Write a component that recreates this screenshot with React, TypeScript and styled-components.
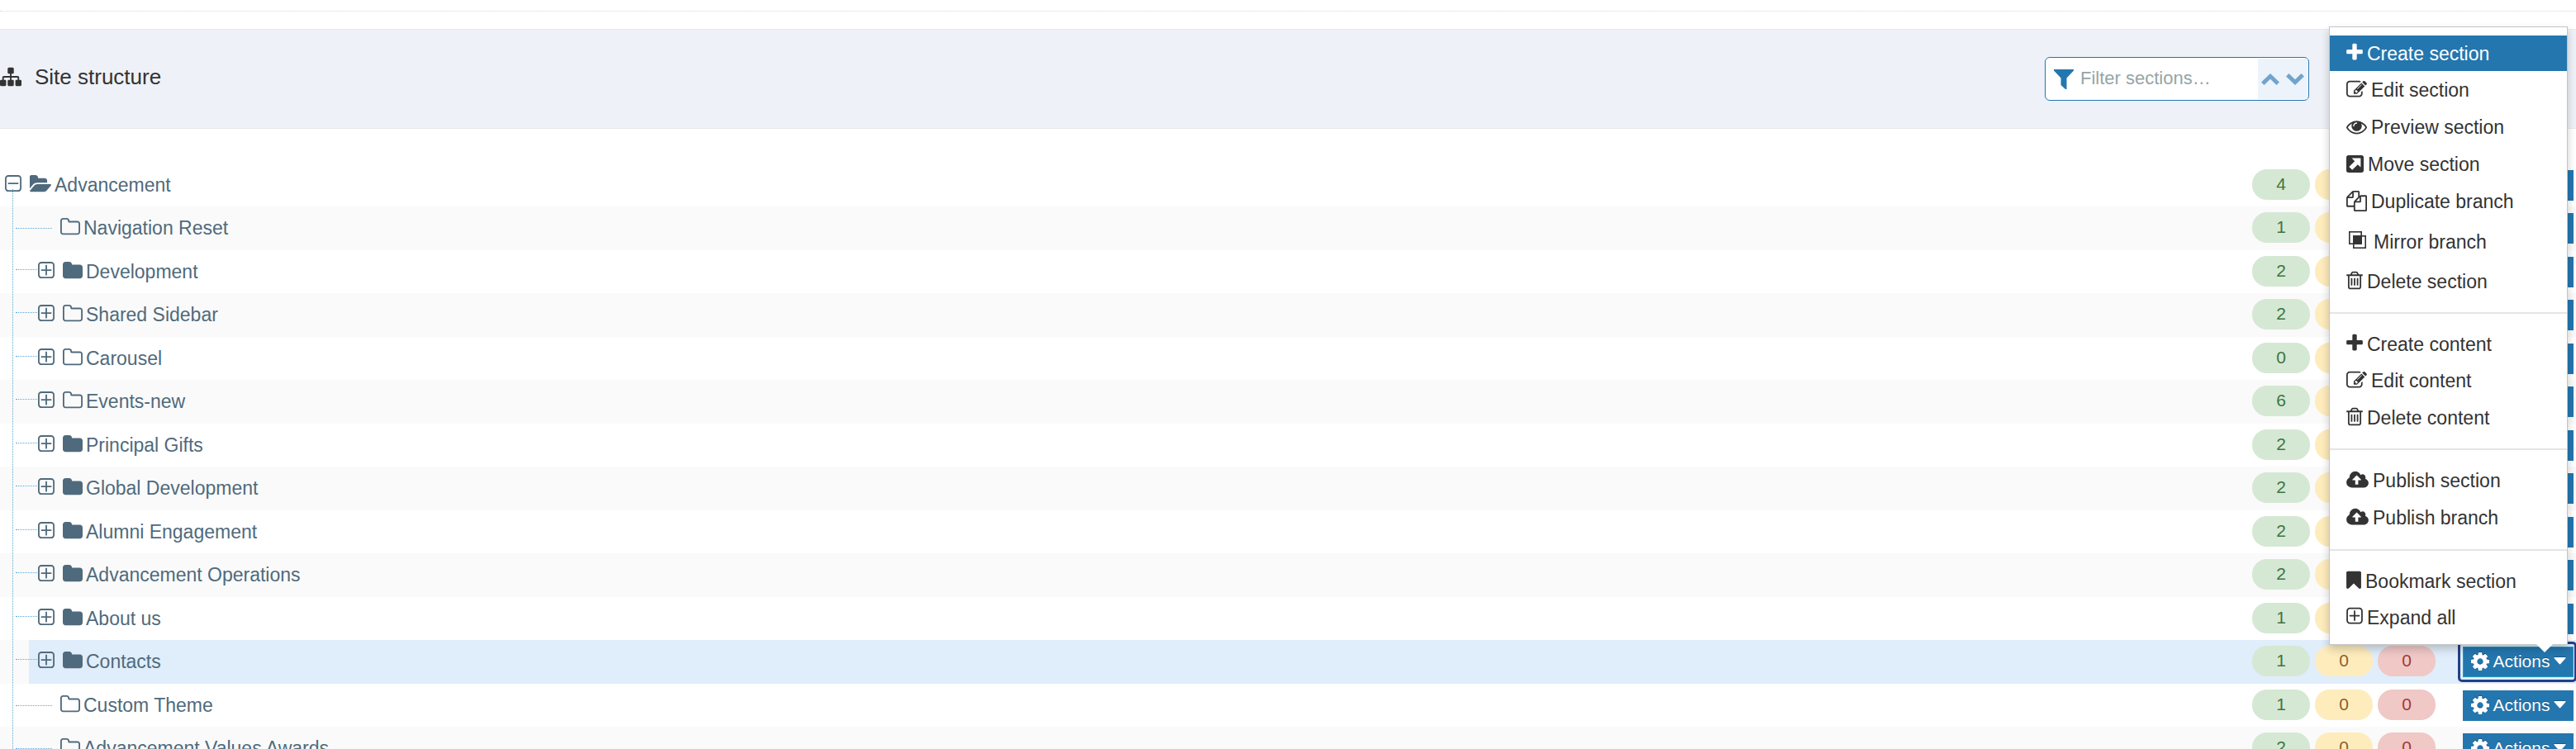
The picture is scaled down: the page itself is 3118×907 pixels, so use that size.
import React from "react";
import styled, { createGlobalStyle, css } from "styled-components";

const GlobalStyle = createGlobalStyle`
  *, *::before, *::after { box-sizing: border-box; }
  body {
    margin: 0;
    background: #fff;
    color: #333;
    font-family: "Liberation Sans", Arial, sans-serif;
    font-size: 23px;
  }
  ul { margin: 0; padding: 0; list-style: none; }
  button, input { font-family: inherit; }
`;

/* ---------- icons ---------- */

type Glyph = { x: number; w: number; d: string };

const glyphs: Record<string, Glyph> = {
  sitemap: { x: 0, w: 1792, d: "M1792 1248v320q0 40-28 68t-68 28h-320q-40 0-68-28t-28-68v-320q0-40 28-68t68-28h96v-192h-512v192h96q40 0 68 28t28 68v320q0 40-28 68t-68 28h-320q-40 0-68-28t-28-68v-320q0-40 28-68t68-28h96v-192h-512v192h96q40 0 68 28t28 68v320q0 40-28 68t-68 28h-320q-40 0-68-28t-28-68v-320q0-40 28-68t68-28h96v-192q0-52 38-90t90-38h512v-192h-96q-40 0-68-28t-28-68v-320q0-40 28-68t68-28h320q40 0 68 28t28 68v320q0 40-28 68t-68 28h-96v192h512q52 0 90 38t38 90v192h96q40 0 68 28t28 68z" },
  plus: { x: 192, w: 1408, d: "M1600 736v192q0 40-28 68t-68 28h-416v416q0 40-28 68t-68 28h-192q-40 0-68-28t-28-68v-416h-416q-40 0-68-28t-28-68v-192q0-40 28-68t68-28h416v-416q0-40 28-68t68-28h192q40 0 68 28t28 68v416h416q40 0 68 28t28 68z" },
  edit: { x: 0, w: 1792, d: "M888 1184l116-116-152-152-116 116v56h96v96h56zm440-720q-16-16-33 1l-350 350q-17 17-1 33t33-1l350-350q17-17 1-33zm80 594v190q0 119-84.5 203.5t-203.5 84.5h-832q-119 0-203.5-84.5t-84.5-203.5v-832q0-119 84.5-203.5t203.5-84.5h832q63 0 117 25 15 7 18 23 3 17-9 29l-49 49q-14 14-32 8-23-6-45-6h-832q-66 0-113 47t-47 113v832q0 66 47 113t113 47h832q66 0 113-47t47-113v-126q0-13 9-22l64-64q15-15 35-7t20 29zm-96-738l288 288-672 672h-288v-288zm444 132l-92 92-288-288 92-92q28-28 68-28t68 28l152 152q28 28 28 68t-28 68z" },
  eye: { x: 0, w: 1792, d: "M1664 960q-152-236-381-353 61 104 61 225 0 185-131.5 316.5t-316.5 131.5-316.5-131.5-131.5-316.5q0-121 61-225-229 117-381 353 133 205 333.5 326.5t434.5 121.5 434.5-121.5 333.5-326.5zm-720-384q0-20-14-34t-34-14q-125 0-214.5 89.5t-89.5 214.5q0 20 14 34t34 14 34-14 14-34q0-86 61-147t147-61q20 0 34-14t14-34zm848 384q0 34-20 69-140 230-376.5 368.5t-499.5 138.5-499.5-139-376.5-368q-20-35-20-69t20-69q140-229 376.5-368t499.5-139 499.5 139 376.5 368q20 35 20 69z" },
  move: { x: 128, w: 1536, d: "M320 128h1152q80 0 136 56t56 136v1152q0 80-56 136t-136 56h-1152q-80 0-136-56t-56-136v-1152q0-80 56-136t136-56zM608 392L872 656L368 1160L656 1424L1136 944L1400 1184L1400 392z" },
  files: { x: 0, w: 1792, d: "M1696 384q40 0 68 28t28 68v1216q0 40-28 68t-68 28h-960q-40 0-68-28t-28-68v-288h-544q-40 0-68-28t-28-68v-672q0-40 20-88t48-76l408-408q28-28 76-48t88-20h416q40 0 68 28t28 68v328q68-40 128-40h416zm-544 213l-299 299h299v-299zm-640-384l-299 299h299v-299zm196 647l316-316v-416h-384v416q0 40-28 68t-68 28h-416v640h512v-256q0-40 20-88t48-76zm956 804v-1152h-384v416q0 40-28 68t-68 28h-416v640h896z" },
  trash: { x: 192, w: 1408, d: "M704 736v576q0 14-9 23t-23 9h-64q-14 0-23-9t-9-23v-576q0-14 9-23t23-9h64q14 0 23 9t9 23zm256 0v576q0 14-9 23t-23 9h-64q-14 0-23-9t-9-23v-576q0-14 9-23t23-9h64q14 0 23 9t9 23zm256 0v576q0 14-9 23t-23 9h-64q-14 0-23-9t-9-23v-576q0-14 9-23t23-9h64q14 0 23 9t9 23zm128 724v-948h-896v948q0 22 7 40.5t14.5 27 10.5 8.5h832q3 0 10.5-8.5t14.5-27 7-40.5zm-672-1076h448l-48-117q-7-9-17-11h-317q-10 2-17 11zm928 32v64q0 14-9 23t-23 9h-96v948q0 83-47 143.5t-113 60.5h-832q-66 0-113-58.5t-47-141.5v-952h-96q-14 0-23-9t-9-23v-64q0-14 9-23t23-9h309l70-167q15-37 54-63t79-26h320q40 0 79 26t54 63l70 167h309q14 0 23 9t9 23z" },
  cloud: { x: 64, w: 1920, d: "M1344 864q0-14-9-23l-352-352q-9-9-23-9t-23 9l-351 351q-10 12-10 24 0 14 9 23t23 9h224v352q0 13 9.5 22.5t22.5 9.5h192q13 0 22.5-9.5t9.5-22.5v-352h224q13 0 22.5-9.5t9.5-22.5zm640 288q0 159-112.5 271.5t-271.5 112.5h-1088q-185 0-316.5-131.5t-131.5-316.5q0-130 70-240t188-165q-2-30-2-43 0-212 150-362t362-150q156 0 285.5 87t188.5 231q71-62 166-62 106 0 181 75t75 181q0 76-41 138 130 31 213.5 135.5t83.5 238.5z" },
  bookmark: { x: 256, w: 1280, d: "M1420 128q23 0 44 9 33 13 52.5 41t19.5 62v1289q0 34-19.5 62t-52.5 41q-19 8-44 8-48 0-83-32l-441-424-441 424q-36 33-83 33-23 0-44-9-33-13-52.5-41t-19.5-62v-1289q0-34 19.5-62t52.5-41q21-9 44-9h1048z" },
  plusSquare: { x: 192, w: 1408, d: "M1344 800v64q0 14-9 23t-23 9h-352v352q0 14-9 23t-23 9h-64q-14 0-23-9t-9-23v-352h-352q-14 0-23-9t-9-23v-64q0-14 9-23t23-9h352v-352q0-14 9-23t23-9h64q14 0 23 9t9 23v352h352q14 0 23 9t9 23zm128 448v-832q0-66-47-113t-113-47h-832q-66 0-113 47t-47 113v832q0 66 47 113t113 47h832q66 0 113-47t47-113zm128-832v832q0 119-84.5 203.5t-203.5 84.5h-832q-119 0-203.5-84.5t-84.5-203.5v-832q0-119 84.5-203.5t203.5-84.5h832q119 0 203.5 84.5t84.5 203.5z" },
  minusSquare: { x: 192, w: 1408, d: "M1344 800v64q0 14-9 23t-23 9h-832q-14 0-23-9t-9-23v-64q0-14 9-23t23-9h832q14 0 23 9t9 23zm128 448v-832q0-66-47-113t-113-47h-832q-66 0-113 47t-47 113v832q0 66 47 113t113 47h832q66 0 113-47t47-113zm128-832v832q0 119-84.5 203.5t-203.5 84.5h-832q-119 0-203.5-84.5t-84.5-203.5v-832q0-119 84.5-203.5t203.5-84.5h832q119 0 203.5 84.5t84.5 203.5z" },
  folder: { x: 64, w: 1664, d: "M1728 608v704q0 92-66 158t-158 66h-1216q-92 0-158-66t-66-158v-960q0-92 66-158t158-66h320q92 0 158 66t66 158v32h672q92 0 158 66t66 158z" },
  folderO: { x: 64, w: 1664, d: "M1600 1312v-704q0-40-28-68t-68-28h-704q-40 0-68-28t-28-68v-64q0-40-28-68t-68-28h-320q-40 0-68 28t-28 68v960q0 40 28 68t68 28h1216q40 0 68-28t28-68zm128-704v704q0 92-66 158t-158 66h-1216q-92 0-158-66t-66-158v-960q0-92 66-158t158-66h320q92 0 158 66t66 158v32h672q92 0 158 66t66 158z" },
  folderOpen: { x: 0, w: 1815, d: "M1815 952q0 31-31 66l-336 396q-43 51-120.5 86.5t-143.5 35.5h-1088q-34 0-60.5-13t-26.5-43q0-31 31-66l336-396q43-51 120.5-86.5t143.5-35.5h1088q34 0 60.5 13t26.5 43zm-343-344v160h-832q-94 0-197 47.5t-164 119.5l-337 396-5 6q0-4-.5-12.5t-.5-12.5v-960q0-92 66-158t158-66h320q92 0 158 66t66 158v32h544q92 0 158 66t66 158z" },
  cog: { x: 128, w: 1536, d: "M1152 896q0-106-75-181t-181-75-181 75-75 181 75 181 181 75 181-75 75-181zm512-109v222q0 12-8 23t-20 13l-185 28q-19 54-39 91 35 50 107 138 10 12 10 25t-9 23q-27 37-99 108t-94 71q-12 0-26-9l-138-108q-44 23-91 38-16 136-29 186-7 28-36 28h-222q-14 0-24.5-8.5t-11.5-21.5l-28-184q-49-16-90-37l-141 107q-10 9-25 9-14 0-25-11-126-114-165-168-7-10-7-23 0-12 8-23 15-21 51-66.5t54-70.5q-27-50-41-99l-183-27q-13-2-21-12.5t-8-23.5v-222q0-12 8-23t19-13l186-28q14-46 39-92-40-57-107-138-10-12-10-24 0-10 9-23 26-36 98.5-107.5t94.5-71.5q13 0 26 10l138 107q44-23 91-38 16-136 29-186 7-28 36-28h222q14 0 24.5 8.5t11.5 21.5l28 184q49 16 90 37l142-107q9-9 24-9 13 0 25 10 129 119 165 170 7 8 7 22 0 12-8 23-15 21-51 66.5t-54 70.5q26 50 41 98l183 28q13 2 21 12.5t8 23.5z" },
};

const Svg = styled.svg`
  display: block;
  flex: none;
  fill: currentColor;
`;

function Icon({ name, size }: { name: string; size: number }) {
  const g = glyphs[name];
  return (
    <Svg
      aria-hidden="true"
      width={Math.round((g.w * size) / 1792)}
      height={size}
      viewBox={`${g.x} 0 ${g.w} 1792`}
      fillRule="evenodd"
    >
      <path d={g.d} />
    </Svg>
  );
}

function MirrorIcon() {
  return (
    <Svg aria-hidden="true" width="21" height="21" viewBox="0 0 21 21">
      <rect x="0.8" y="0.8" width="14.400" height="14.400" fill="none" stroke="currentColor" strokeWidth="1.600" />
      <rect x="5.8" y="5.8" width="14.400" height="14.400" fill="none" stroke="currentColor" strokeWidth="1.600" />
      <rect x="5" y="5" width="11" height="11" />
    </Svg>
  );
}

/* ---------- page frame ---------- */

const Page = styled.main`
  position: relative;
  height: 100vh;
  overflow: hidden;
  padding-top: 13px;
`;

const TopRule = styled.hr`
  height: 0;
  margin: 0 0 21px;
  border: 0;
  border-top: 1px dotted #d8d8d8;
`;

const Header = styled.header`
  display: flex;
  align-items: center;
  justify-content: space-between;
  height: 121px;
  padding-right: 323px;
  background: #eef1f7;
  border-top: 1px solid #e8e8ea;
  border-bottom: 1px solid #e8e8ea;
`;

const Title = styled.h1`
  display: flex;
  align-items: center;
  gap: 16px;
  margin: 0;
  padding-bottom: 6px;
  font-size: 26px;
  line-height: 30px;
  font-weight: 400;
`;

const FilterBox = styled.div`
  display: flex;
  align-items: center;
  width: 320px;
  height: 53px;
  padding: 1px 1px 1px 10px;
  background: #fff;
  border: 1px solid #2476ae;
  border-radius: 6px;
`;

const FilterInput = styled.input`
  flex: 1;
  min-width: 0;
  height: 49px;
  padding: 0 0 2px 8px;
  border: 0;
  outline: 0;
  background: transparent;
  color: #333;
  font-size: 22px;
  &::placeholder { color: #95a5a6; opacity: 1; }
`;

const Steps = styled.div`
  display: flex;
  height: 49px;
  width: 60px;
  background: #ecf3fa;
`;

const StepButton = styled.button`
  display: flex;
  flex: 1;
  align-items: center;
  justify-content: center;
  padding: 0;
  border: 0;
  background: none;
  color: #72a4cb;
`;

/* ---------- tree ---------- */

const Tree = styled.ul`
  padding-top: 42px;
`;

const Children = styled.ul`
  position: relative;
  &::before {
    content: "";
    position: absolute;
    left: 15px;
    top: -21px;
    bottom: 0;
    border-left: 1px dotted #5aa9d6;
  }
`;

const Row = styled.div<{ $striped?: boolean; $selected?: boolean; $root?: boolean }>`
  display: flex;
  align-items: center;
  height: ${(p) => (p.$striped ? 53 : 52)}px;
  padding: 0 3px ${(p) => (p.$striped ? 1 : 0)}px ${(p) => (p.$root ? 6 : 19)}px;
  background: ${(p) => (p.$striped ? "#fafafa" : "#fff")};
  ${(p) =>
    p.$selected &&
    css`
      background: linear-gradient(to right, #fafafa 35px, #e0edfa 35px);
    `}
`;

const Connector = styled.span<{ $leaf?: boolean }>`
  width: ${(p) => (p.$leaf ? 44 : 26)}px;
  margin-right: ${(p) => (p.$leaf ? 10 : 1)}px;
  margin-bottom: ${(p) => (p.$leaf ? 0 : 5)}px;
  border-top: 1px dotted #5aa9d6;
`;

const Toggle = styled.button`
  display: block;
  margin: 0 10px 0 0;
  padding: 0 0 2px;
  border: 0;
  background: none;
  color: #4f6a7c;
`;

const SectionLink = styled.a`
  display: flex;
  align-items: center;
  gap: 4px;
  margin-right: auto;
  color: #4f6a7c;
  line-height: 26px;
  text-decoration: none;
  ${Svg} { margin-bottom: 2px; }
`;

const tones = {
  green: ["#d5e8d4", "#3f753f"],
  yellow: ["#feecbd", "#8e5f2b"],
  red: ["#f0c8c6", "#a33a32"],
};

const Badges = styled.div`
  display: flex;
  align-self: flex-start;
  gap: 6px;
  margin: 7px 33px 0 0;
`;

const Badge = styled.span<{ $tone: keyof typeof tones }>`
  width: 70px;
  padding-bottom: 2px;
  border-radius: 18px;
  background: ${(p) => tones[p.$tone][0]};
  color: ${(p) => tones[p.$tone][1]};
  font-size: 21px;
  line-height: 35px;
  text-align: center;
`;

const ActionsButton = styled.button<{ $active?: boolean }>`
  position: relative;
  display: flex;
  align-items: center;
  align-self: flex-start;
  justify-content: space-between;
  width: 134px;
  height: 37px;
  margin: 8px 0 0;
  padding: 0 8px 2px 9px;
  border: 1px solid ${(p) => (p.$active ? "#1f9bc4" : "#2476ae")};
  background: #2476ae;
  color: #fff;
  font-size: 21px;
  text-shadow: 0 -1px 0 rgba(0, 0, 0, 0.3);
  ${Svg} { filter: drop-shadow(0 -1px 0 rgba(0, 0, 0, 0.25)); }
  ${(p) =>
    p.$active &&
    css`
      &::after {
        content: "";
        position: absolute;
        inset: -7px -5px -7px -7px;
        border: 3px solid #233f88;
        border-radius: 5px;
      }
    `}
`;

/* ---------- actions menu ---------- */

const Menu = styled.div`
  position: absolute;
  z-index: 1;
  top: 32px;
  right: 10px;
  width: 289px;
  padding: 10px 0 11px;
  background: #fff;
  border: 1px solid #c4c4c4;
  box-shadow: 0 5px 10px rgba(0, 0, 0, 0.2);
  &::after {
    content: "";
    position: absolute;
    top: 100%;
    right: 17px;
    border: 10px solid transparent;
    border-top-color: #fff;
    border-bottom: 0;
  }
`;

const MenuList = styled.ul`
  display: flex;
  flex-direction: column;
  gap: 1px;
`;

const MenuButton = styled.button<{ $active?: boolean; $height: number }>`
  display: flex;
  align-items: center;
  gap: 5px;
  width: 100%;
  height: ${(p) => p.$height}px;
  padding: 0 20px;
  border: 0;
  background: ${(p) => (p.$active ? "#2476ae" : "transparent")};
  color: ${(p) => (p.$active ? "#fff" : "#333")};
  font-size: 23px;
  line-height: 26px;
  text-align: left;
  ${Svg} { margin-bottom: 2px; }
`;

const MirrorSlot = styled.span`
  display: flex;
  padding: 0 4px 3px 3px;
`;

const Divider = styled.li`
  height: 2px;
  margin: 15px 0 14px;
  background: #e5e5e5;
`;

/* ---------- data ---------- */

type Section = { name: string; count: number; icon: "folder" | "folderO"; leaf?: boolean; selected?: boolean };

const sections: Section[] = [
  { name: "Navigation Reset", count: 1, icon: "folderO", leaf: true },
  { name: "Development", count: 2, icon: "folder" },
  { name: "Shared Sidebar", count: 2, icon: "folderO" },
  { name: "Carousel", count: 0, icon: "folderO" },
  { name: "Events-new", count: 6, icon: "folderO" },
  { name: "Principal Gifts", count: 2, icon: "folder" },
  { name: "Global Development", count: 2, icon: "folder" },
  { name: "Alumni Engagement", count: 2, icon: "folder" },
  { name: "Advancement Operations", count: 2, icon: "folder" },
  { name: "About us", count: 1, icon: "folder" },
  { name: "Contacts", count: 1, icon: "folder", selected: true },
  { name: "Custom Theme", count: 1, icon: "folderO", leaf: true },
  { name: "Advancement Values Awards", count: 2, icon: "folderO", leaf: true },
];

type MenuEntry = { label: string; icon: string; height?: number };

const menuGroups: MenuEntry[][] = [
  [
    { label: "Create section", icon: "plus" },
    { label: "Edit section", icon: "edit", height: 44 },
    { label: "Preview section", icon: "eye", height: 44 },
    { label: "Move section", icon: "move", height: 44 },
    { label: "Duplicate branch", icon: "files", height: 44 },
    { label: "Mirror branch", icon: "mirror", height: 51 },
    { label: "Delete section", icon: "trash" },
  ],
  [
    { label: "Create content", icon: "plus" },
    { label: "Edit content", icon: "edit", height: 44 },
    { label: "Delete content", icon: "trash" },
  ],
  [
    { label: "Publish section", icon: "cloud", height: 44 },
    { label: "Publish branch", icon: "cloud", height: 44 },
  ],
  [
    { label: "Bookmark section", icon: "bookmark" },
    { label: "Expand all", icon: "plusSquare" },
  ],
];

function RowControls({ count, active }: { count: number; active?: boolean }) {
  return (
    <>
      <Badges>
        <Badge $tone="green">{count}</Badge>
        <Badge $tone="yellow">0</Badge>
        <Badge $tone="red">0</Badge>
      </Badges>
      <ActionsButton type="button" $active={active} aria-haspopup="menu" aria-expanded={!!active}>
        <Icon name="cog" size={26} />
        Actions
        <Svg width="15" height="12" viewBox="0 0 15 12" aria-hidden="true">
          <path d="M1 1h13q1 0 .5 1L8.300 9q-.8.800-1.600 0L.5 2Q0 1 1 1z" />
        </Svg>
      </ActionsButton>
    </>
  );
}

export default function App() {
  return (
    <Page>
      <GlobalStyle />
      <TopRule />
      <Header>
        <Title>
          <Icon name="sitemap" size={26} />
          Site structure
        </Title>
        <FilterBox>
          <Svg width="24" height="24" viewBox="0 0 24 24" color="#2476ae" aria-hidden="true">
            <path d="M0 0h24v1.500L15.500 10.500V24h-1.500L8.500 19V10.500L0 1.500z" />
          </Svg>
          <FilterInput type="text" aria-label="Filter sections" placeholder="Filter sections…" />
          <Steps>
            <StepButton type="button" aria-label="Previous match">
              <Svg width="22" height="14" viewBox="0 0 22 14" aria-hidden="true">
                <path d="M11 0L22 10.500 18.500 14 11 6.800 3.500 14 0 10.500z" />
              </Svg>
            </StepButton>
            <StepButton type="button" aria-label="Next match">
              <Svg width="22" height="14" viewBox="0 0 22 14" aria-hidden="true">
                <path d="M11 14L22 3.500 18.500 0 11 7.200 3.500 0 0 3.500z" />
              </Svg>
            </StepButton>
          </Steps>
        </FilterBox>
      </Header>

      <Tree>
        <li>
          <Row $root>
            <Toggle type="button" aria-label="Collapse Advancement">
              <Icon name="minusSquare" size={26} />
            </Toggle>
            <SectionLink href="#advancement">
              <Icon name="folderOpen" size={26} />
              Advancement
            </SectionLink>
            <RowControls count={4} />
          </Row>
          <Children>
            {sections.map((s, i) => (
              <li key={s.name}>
                <Row $striped={i % 2 === 0} $selected={s.selected}>
                  <Connector $leaf={s.leaf} />
                  {!s.leaf && (
                    <Toggle type="button" aria-label={`Expand ${s.name}`}>
                      <Icon name="plusSquare" size={26} />
                    </Toggle>
                  )}
                  <SectionLink href={`#section-${i}`}>
                    <Icon name={s.icon} size={26} />
                    {s.name}
                  </SectionLink>
                  <RowControls count={s.count} active={s.selected} />
                </Row>
              </li>
            ))}
          </Children>
        </li>
      </Tree>

      <Menu>
        <MenuList>
          {menuGroups.map((group, g) => (
            <React.Fragment key={g}>
              {g > 0 && <Divider role="separator" />}
              {group.map((m, i) => (
                <li key={m.label}>
                  <MenuButton type="button" $active={g === 0 && i === 0} $height={m.height ?? 43}>
                    {m.icon === "mirror" ? (
                      <MirrorSlot>
                        <MirrorIcon />
                      </MirrorSlot>
                    ) : (
                      <Icon name={m.icon} size={25} />
                    )}
                    {m.label}
                  </MenuButton>
                </li>
              ))}
            </React.Fragment>
          ))}
        </MenuList>
      </Menu>
    </Page>
  );
}
